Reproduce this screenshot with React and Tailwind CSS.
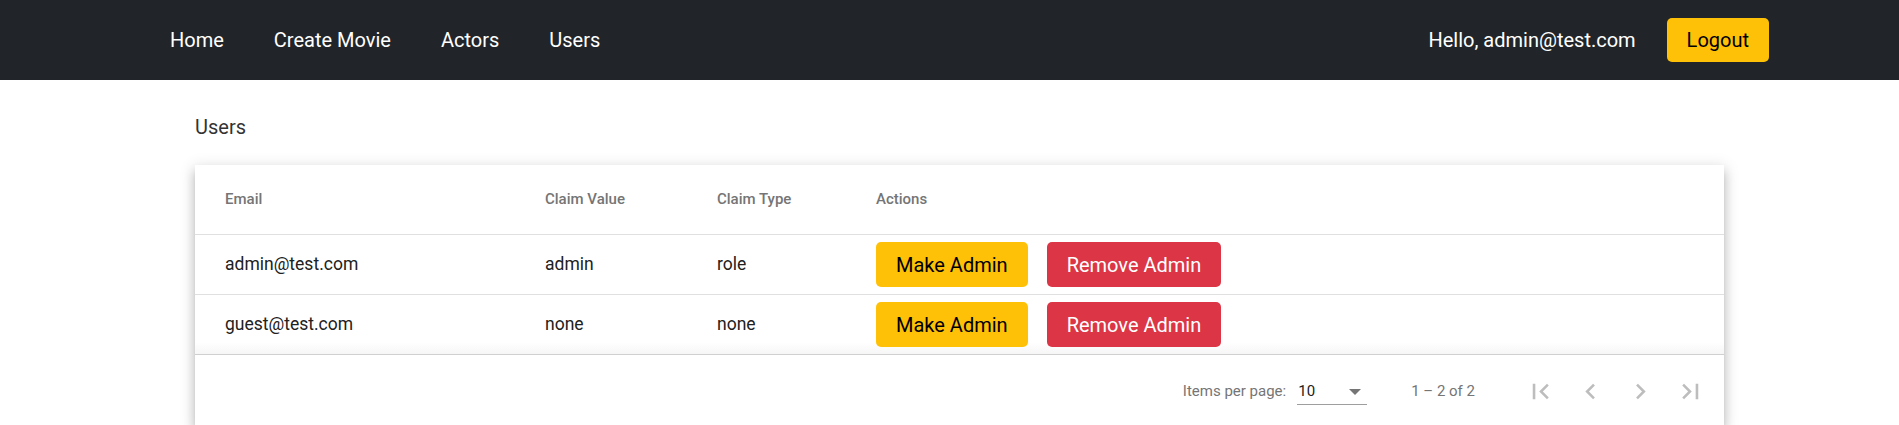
import React from "react";

const users = [
  { email: "admin@test.com", value: "admin", type: "role" },
  { email: "guest@test.com", value: "none", type: "none" },
];

function PageIcon({ d }) {
  return (
    <button className="w-[50px] h-[50px] flex items-center justify-center text-[#bdbdbd] cursor-default">
      <svg viewBox="0 0 24 24" width="31" height="31" fill="currentColor">
        <path d={d} />
      </svg>
    </button>
  );
}

export default function App() {
  return (
    <div className="min-h-[425px] bg-white font-['Roboto',sans-serif]">
      <nav className="h-[80px] bg-[#212529] flex items-center text-white text-[20px]">
        <div className="flex gap-[50px] ml-[170px]">
          <a href="#">Home</a>
          <a href="#">Create Movie</a>
          <a href="#">Actors</a>
          <a href="#">Users</a>
        </div>
        <div className="ml-auto mr-[130px] flex items-center gap-[31px]">
          <span>Hello, admin@test.com</span>
          <button className="h-[44px] px-[20px] rounded-[5px] bg-[#ffc107] text-black">Logout</button>
        </div>
      </nav>

      <main className="px-[195px] pt-[32px]">
        <h2 className="text-[20px] leading-[30px] text-[#333]">Users</h2>
        <div className="mt-[23px] w-[1529px] bg-white shadow-[0_5px_5px_-3px_rgba(0,0,0,0.2),0_8px_10px_1px_rgba(0,0,0,0.14),0_3px_14px_2px_rgba(0,0,0,0.12)]">
          <div className="grid grid-cols-[350px_172px_159px_1fr] h-[70px] items-center border-b border-[#e0e0e0] text-[15px] font-medium text-[#757575]">
            <div className="pl-[30px]">Email</div>
            <div>Claim Value</div>
            <div>Claim Type</div>
            <div>Actions</div>
          </div>
          {users.map((u, i) => (
            <div
              key={u.email}
              className={
                "grid grid-cols-[350px_172px_159px_1fr] h-[60px] items-center border-b text-[17.5px] text-[#212121] " +
                (i === users.length - 1
                  ? "border-[#d0d0d0] bg-gradient-to-b from-white from-80% to-[#f6f6f6]"
                  : "border-[#e0e0e0]")
              }
            >
              <div className="pl-[30px]">{u.email}</div>
              <div>{u.value}</div>
              <div>{u.type}</div>
              <div className="flex gap-[19px]">
                <button className="h-[45px] px-[20px] rounded-[5px] bg-[#ffc107] text-black text-[20px]">Make Admin</button>
                <button className="h-[45px] px-[20px] rounded-[5px] bg-[#dc3545] text-white text-[20px]">Remove Admin</button>
              </div>
            </div>
          ))}
          <div className="h-[70px] flex items-center justify-end pr-[9px] text-[15px] text-[#757575]">
            <span className="mt-[3px]">Items per page:</span>
            <div className="ml-[11px] w-[70px] h-[26px] mt-[4px] border-b border-[#9e9e9e] flex items-center justify-between pl-[1px] pr-[6px]">
              <span className="text-[#212121]">10</span>
              <span className="w-0 h-0 border-l-[6px] border-r-[6px] border-t-[6px] border-l-transparent border-r-transparent border-t-[#757575]"></span>
            </div>
            <span className="ml-[44px] mr-[40px] mt-[3px]">1 – 2 of 2</span>
            <div className="flex mt-[3px]">
              <PageIcon d="M18.41 16.59L13.82 12l4.59-4.59L17 6l-6 6 6 6zM6 6h2v12H6z" />
              <PageIcon d="M15.41 7.41L14 6l-6 6 6 6 1.41-1.41L10.83 12z" />
              <PageIcon d="M10 6L8.59 7.41 13.17 12l-4.58 4.59L10 18l6-6z" />
              <PageIcon d="M5.59 7.41L10.18 12l-4.59 4.59L7 18l6-6-6-6zM16 6h2v12h-2z" />
            </div>
          </div>
        </div>
      </main>
    </div>
  );
}
